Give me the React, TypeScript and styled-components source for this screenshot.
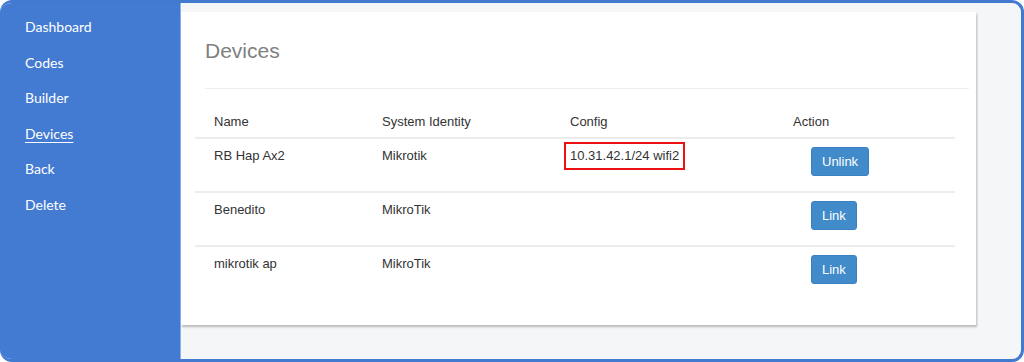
import React from "react";
import styled, { createGlobalStyle } from "styled-components";

interface Device {
  name: string;
  identity: string;
  config?: string;
  linked: boolean;
}

const devices: Device[] = [
  { name: "RB Hap Ax2", identity: "Mikrotik", config: "10.31.42.1/24 wifi2", linked: true },
  { name: "Benedito", identity: "MikroTik", linked: false },
  { name: "mikrotik ap", identity: "MikroTik", linked: false },
];

const menu = ["Dashboard", "Codes", "Builder", "Devices", "Back", "Delete"];

const App: React.FC = () => {
  return (
    <>
      <GlobalStyle />
      <Frame>
        <Sidebar>
          {menu.map((item) => (
            <MenuItem key={item} $active={item === "Devices"}>
              {item}
            </MenuItem>
          ))}
        </Sidebar>
        <Main>
          <Card>
            <Title>Devices</Title>
            <Divider />
            <Table>
              <HeadRow>
                <Cell>Name</Cell>
                <Cell>System Identity</Cell>
                <Cell>Config</Cell>
                <Cell>Action</Cell>
              </HeadRow>
              {devices.map((d) => (
                <Row key={d.name}>
                  <Cell>{d.name}</Cell>
                  <Cell>{d.identity}</Cell>
                  <Cell>{d.config && <Highlight>{d.config}</Highlight>}</Cell>
                  <Cell>
                    <ActionButton>{d.linked ? "Unlink" : "Link"}</ActionButton>
                  </Cell>
                </Row>
              ))}
            </Table>
          </Card>
        </Main>
      </Frame>
    </>
  );
};

export default App;

const GlobalStyle = createGlobalStyle`
  html, body {
    margin: 0;
    padding: 0;
    background: #ffffff;
  }
  * {
    box-sizing: border-box;
  }
`;

const Frame = styled.div`
  display: flex;
  width: 1024px;
  height: 362px;
  border: 3px solid #4279d1;
  border-left: none;
  border-radius: 12px;
  overflow: hidden;
  background-color: #f5f6f8;
`;

const Sidebar = styled.nav`
  display: flex;
  flex-direction: column;
  width: 181px;
  flex-shrink: 0;
  padding: 13px 0 0 25px;
  gap: 13px;
  background-color: #437bd2;
  border-right: 1px solid #8fb1e6;
`;

const MenuItem = styled.a<{ $active?: boolean }>`
  font-family: "Lato", "Noto Sans", sans-serif;
  font-size: 14px;
  line-height: 22.6px;
  color: #ffffff;
  text-decoration: ${(p) => (p.$active ? "underline" : "none")};
  text-underline-offset: 3px;
  cursor: pointer;
`;

const Main = styled.main`
  flex: 1;
  padding: 9px 45px 0 0;
`;

const Card = styled.section`
  background-color: #ffffff;
  height: 313px;
  padding: 24px 7px 0 14px;
  box-shadow: 1px 2px 2px rgba(0, 0, 0, 0.25);
  font-family: "Liberation Sans", Arial, sans-serif;
`;

const Title = styled.h1`
  margin: 0 0 0 10px;
  font-weight: 400;
  font-size: 21px;
  line-height: 30px;
  color: #808080;
`;

const Divider = styled.hr`
  margin: 22px 0 0 10px;
  border: none;
  border-top: 1px solid #eeeeee;
`;

const Table = styled.div`
  display: flex;
  flex-direction: column;
  width: 760px;
  margin-top: 16px;
`;

const HeadRow = styled.div`
  display: grid;
  grid-template-columns: 168px 188px 223px 181px;
  height: 34px;
  border-bottom: 2px solid #ececec;
`;

const Row = styled(HeadRow)`
  height: 54px;
  &:last-child {
    border-bottom: none;
  }
`;

const Cell = styled.div`
  padding: 8px 0 0 19px;
  font-size: 13px;
  line-height: 18px;
  color: #333333;
  white-space: nowrap;
`;

const Highlight = styled.span`
  display: inline-block;
  margin: -5px 0 0 -6px;
  padding: 3px 4px;
  border: 2px solid #ee1111;
  line-height: 18px;
`;

const ActionButton = styled.button`
  margin-left: 18px;
  padding: 0 10px;
  height: 29px;
  border: 1px solid #3b80c2;
  border-radius: 3px;
  background-color: #428bca;
  color: #ffffff;
  font-family: "Liberation Sans", Arial, sans-serif;
  font-size: 13px;
  cursor: pointer;
`;
